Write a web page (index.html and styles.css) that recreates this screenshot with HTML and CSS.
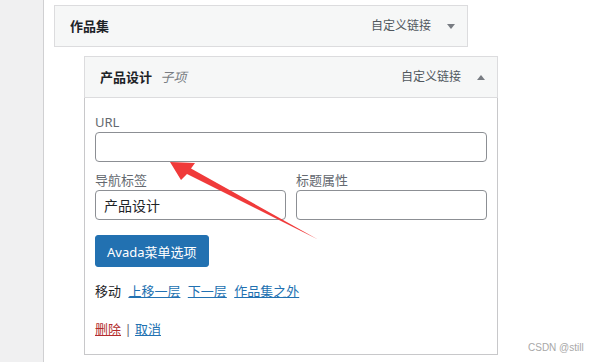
FILE: index.html
```html
<!DOCTYPE html>
<html lang="zh-CN">
<head>
  <meta charset="UTF-8">
  <meta name="viewport" content="width=device-width, initial-scale=1.0">
  <title>菜单项</title>
  <link rel="stylesheet" href="styles.css">
</head>
<body>

  <div class="page">
    <aside class="sidebar"></aside>

    <main class="menu">
      <!-- collapsed parent item -->
      <div class="menu-item">
        <div class="item-bar">
          <span class="item-title">作品集</span>
          <span class="item-type">自定义链接</span>
          <span class="toggle down"></span>
        </div>
      </div>

      <!-- open child item -->
      <div class="menu-item sub">
        <div class="item-bar">
          <span class="item-title">产品设计 <em class="sub-label">子项</em></span>
          <span class="item-type">自定义链接</span>
          <span class="toggle up"></span>
        </div>

        <div class="item-settings">
          <div class="field">
            <label for="url">URL</label>
            <input type="text" id="url">
          </div>

          <div class="field-row">
            <div class="field">
              <label for="navLabel">导航标签</label>
              <input type="text" id="navLabel" value="产品设计">
            </div>
            <div class="field">
              <label for="titleAttr">标题属性</label>
              <input type="text" id="titleAttr">
            </div>
          </div>

          <button class="btn-primary">Avada菜单选项</button>

          <p class="move">
            移动
            <a href="#">上移一层</a>
            <a href="#">下一层</a>
            <a href="#">作品集之外</a>
          </p>

          <p class="actions">
            <a href="#" class="delete">删除</a> <span class="sep">|</span> <a href="#">取消</a>
          </p>
        </div>
      </div>
    </main>
  </div>

  <!-- annotation arrow drawn over the form -->
  <svg class="arrow" width="602" height="362" viewBox="0 0 602 362">
    <polygon points="170,162 195,163 191,168.5 318,239.5 187,174 181,180" fill="#f03a3a"/>
  </svg>

  <div class="watermark">CSDN @still</div>

</body>
</html>
```

FILE: styles.css
```css
html, body {
  height: 100%;
}
body {
  margin: 0;
  background: #fff;
  color: #1d2327;
  font-family: "Noto Sans", "Noto Sans CJK SC", sans-serif;
  font-size: 13px;
  overflow: hidden;
  position: relative;
}
.page {
  display: flex;
  height: 100%;
}
.sidebar {
  width: 43px;
  background: #f0f0f1;
  border-right: 1px solid #d0d0d2;
  flex-shrink: 0;
}
.menu {
  padding: 5px 0 0 10px;
}
.menu-item {
  width: 414px;
  box-sizing: border-box;
}
.menu-item.sub {
  margin: 9px 0 0 30px;
}
.item-bar {
  display: flex;
  align-items: center;
  height: 40px;
  padding: 0 12px 0 15px;
  background: #f6f7f7;
  border: 1px solid #dcdcde;
}
.item-title {
  flex: 1;
  font-weight: bold;
  font-size: 13px;
  line-height: 18px;
}
.sub-label {
  font-weight: normal;
  color: #787c82;
  margin-left: 5px;
}
.item-type {
  color: #50575e;
  font-size: 12px;
  line-height: 18px;
  margin-right: 16px;
}
.toggle {
  width: 0;
  height: 0;
  border-left: 4px solid transparent;
  border-right: 4px solid transparent;
}
.toggle.down {
  border-top: 5px solid #787c82;
}
.toggle.up {
  border-bottom: 5px solid #787c82;
}
.item-settings {
  border: 1px solid #c8c8ca;
  border-top: none;
  padding: 15px 10px 16px 10px;
}
.field label {
  display: block;
  color: #646970;
  line-height: 18px;
  margin-bottom: 1px;
}
.field input {
  display: block;
  width: 100%;
  height: 30px;
  box-sizing: border-box;
  border: 1px solid #8c8f94;
  border-radius: 4px;
  padding: 0 8px;
  font-family: inherit;
  font-size: 14px;
  color: #1d2327;
}
.field-row {
  display: grid;
  grid-template-columns: 1fr 1fr;
  gap: 10px;
  margin-top: 9px;
}
.btn-primary {
  display: block;
  margin-top: 15px;
  height: 32px;
  padding: 0 11px;
  background: #2271b1;
  border: 1px solid #2271b1;
  border-radius: 3px;
  color: #fff;
  font-family: inherit;
  font-size: 13px;
}
.move {
  margin: 15px 0 0;
  line-height: 18px;
}
.move a {
  margin-left: 4px;
}
a {
  color: #2271b1;
}
.actions {
  margin: 20px 0 0;
  line-height: 18px;
}
.actions .delete {
  color: #b32d2e;
}
.sep {
  color: #646970;
}
.arrow {
  position: absolute;
  left: 0;
  top: 0;
  pointer-events: none;
}
.watermark {
  position: absolute;
  left: 528px;
  top: 341px;
  color: #a8a8a8;
  font-size: 10px;
  line-height: 14px;
  font-family: "Liberation Sans", sans-serif;
}
```
